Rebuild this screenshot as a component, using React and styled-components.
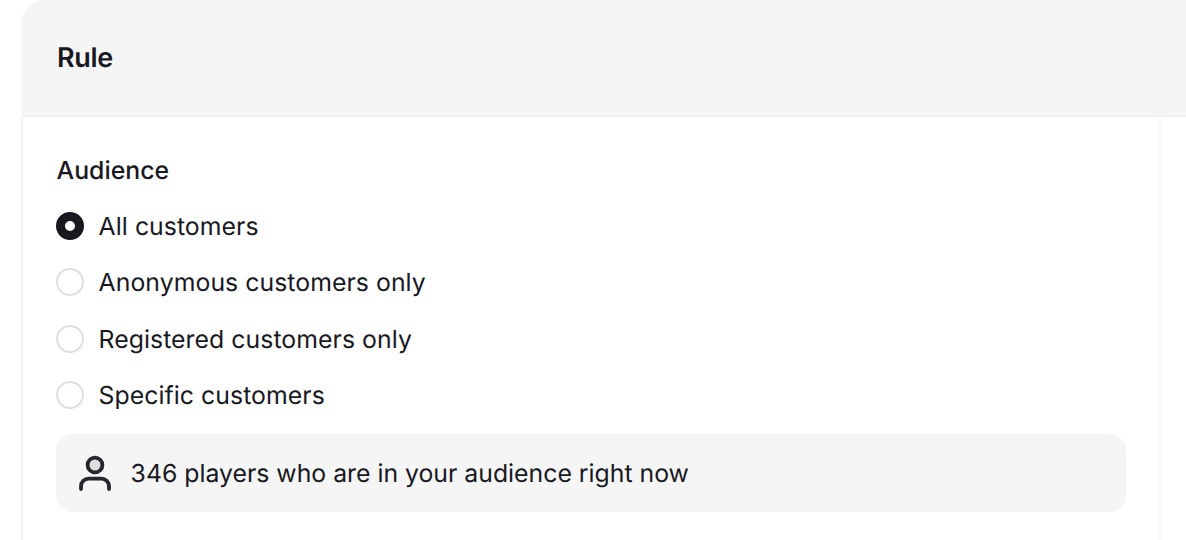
import React from "react";
import styled, { createGlobalStyle } from "styled-components";

const Global = createGlobalStyle`
  html, body { margin: 0; padding: 0; background: #fff; }
  body { width: 1186px; height: 540px; overflow: hidden; font-family: Inter, "Liberation Sans", sans-serif; color: #18181f; text-rendering: geometricPrecision; }
`;
const Page = styled.div`
  width: 1186px; height: 540px; overflow: hidden; padding-left: 21px; box-sizing: border-box;
`;
const Card = styled.section`
  width: 1200px; height: 600px; box-sizing: border-box;
  border-left: 2px solid #f5f5f5; border-top-left-radius: 24px; overflow: hidden;
  display: flex; flex-direction: column;
`;
const Header = styled.header`
  height: 117px; box-sizing: border-box; background: #f5f5f5; border-bottom: 1px solid #eeeeee;
  padding-left: 34px; display: flex; align-items: center;
`;
const Title = styled.h2`
  margin: 0; font-size: 27px; line-height: 32px; font-weight: 600; letter-spacing: -0.3px;
`;
const Body = styled.div`display: flex; flex: 1;`;
const Main = styled.div`
  width: 1138px; box-sizing: border-box; border-right: 2px solid #f5f5f5;
  padding: 37px 34px 0 33px; display: flex; flex-direction: column;
`;
const Label = styled.div`
  font-size: 24.8px; line-height: 32px; font-weight: 500; margin-bottom: 12px; padding-left: 0.6px;
`;
const Option = styled.label`
  display: flex; align-items: center; gap: 14.6px; height: 56.33px;
  font-size: 24.8px; letter-spacing: 0.05px;
`;
const Radio = styled.span`
  width: 28px; height: 28px; box-sizing: border-box; border-radius: 50%; flex: none;
  border: ${p => p.$on ? "9.5px solid #18181f" : "2px solid #dfdfdf"};
  background: #fff;
`;
const Notice = styled.div`
  margin-top: 11px; width: 1070px; height: 78px; box-sizing: border-box; border-radius: 16px; background: #f5f5f5;
  display: flex; align-items: center; gap: 15.6px; padding-left: 21px; font-size: 24.8px;
`;

const options = ["All customers", "Anonymous customers only", "Registered customers only", "Specific customers"];

export default function App() {
  return (
    <Page>
      <Global />
      <Card>
        <Header><Title>Rule</Title></Header>
        <Body>
          <Main>
            <Label>Audience</Label>
            {options.map((o, i) => (
              <Option key={o}><Radio $on={i === 0} />{o}</Option>
            ))}
            <Notice>
              <svg width="38" height="38" viewBox="0 0 38 38" fill="none">
                <circle cx="18" cy="11" r="7.4" fill="#dedede" stroke="#26262c" strokeWidth="3.8" />
                <path d="M4 35v-2.7a7.6 7.6 0 0 1 7.6-7.6h12.8a7.6 7.6 0 0 1 7.6 7.6v2.7" stroke="#26262c" strokeWidth="3.8" strokeLinecap="round" />
              </svg>
              346 players who are in your audience right now
            </Notice>
          </Main>
        </Body>
      </Card>
    </Page>
  );
}
